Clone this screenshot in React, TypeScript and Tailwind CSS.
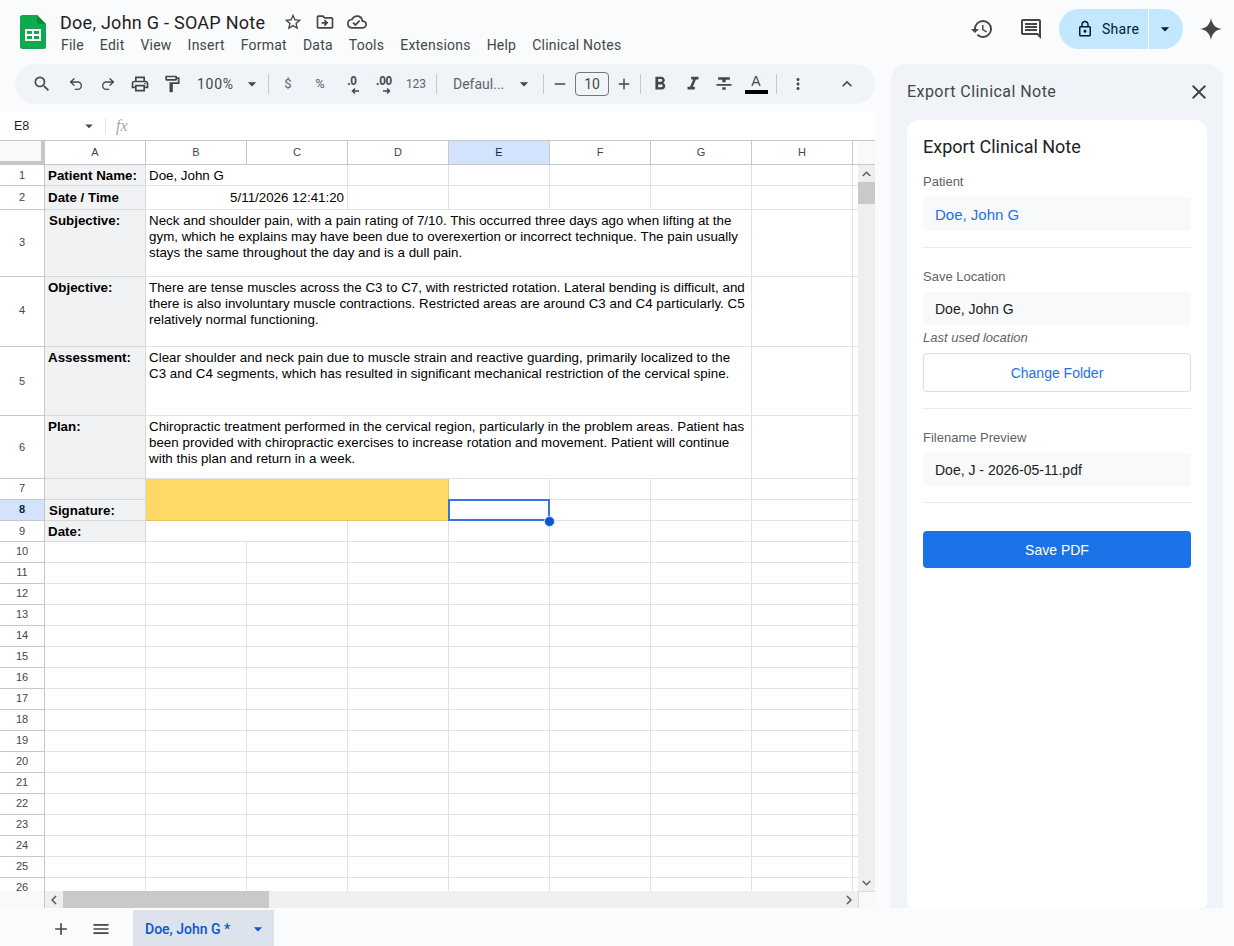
import type { ReactNode } from "react";
import { Redo2, Undo2 } from "lucide-react";
import {
  MdAdd,
  MdArrowDropDown,
  MdClose,
  MdExpandLess,
  MdFormatBold,
  MdFormatItalic,
  MdFormatStrikethrough,
  MdHistory,
  MdKeyboardArrowDown,
  MdKeyboardArrowLeft,
  MdKeyboardArrowRight,
  MdKeyboardArrowUp,
  MdMenu,
  MdMoreVert,
  MdOutlineCloudDone,
  MdOutlineComment,
  MdOutlineDriveFileMove,
  MdOutlineFormatPaint,
  MdOutlineLock,
  MdOutlinePrint,
  MdOutlineStarBorder,
  MdRemove,
  MdSearch,
} from "react-icons/md";

const arial = "[font-family:'Liberation_Sans',Arial,sans-serif]";
const menus = ["File", "Edit", "View", "Insert", "Format", "Data", "Tools", "Extensions", "Help", "Clinical Notes"];
const columns = ["A", "B", "C", "D", "E", "F", "G", "H"];
const blankRows = [10, 11, 12, 13, 14, 15, 16, 17, 18, 19, 20, 21, 22, 23, 24, 25, 26];
const centredLabels = [1, 2, 5, 6, 9];

function SheetsLogo() {
  return (
    <svg width="26" height="34" viewBox="0 0 26 34">
      <path d="M2.5 0H17l9 9v22.5a2.5 2.5 0 0 1-2.5 2.5h-21A2.5 2.5 0 0 1 0 31.500V2.500A2.500 2.500 0 0 1 2.500 0z" fill="#0fa94f" />
      <path d="M17 0l9 9h-6.500A2.500 2.500 0 0 1 17 6.500z" fill="#0b8a3e" />
      <path d="M5 14h16v12H5zm2 2v3h5v-3zm7 0v3h5v-3zm-7 5v3h5v-3zm7 0v3h5v-3z" fill="#fff" fillRule="evenodd" />
    </svg>
  );
}

function ToolButton({ children }: { children: ReactNode }) {
  return <div className="w-8 h-8 flex items-center justify-center text-[#444746] shrink-0">{children}</div>;
}

function Sep() {
  return <div className="w-px h-5 bg-[#c7c7c7] shrink-0" />;
}

function DecimalIcon({ label, right }: { label: string; right?: boolean }) {
  return (
    <ToolButton>
      <div className="relative w-6 h-6 text-[#444746]">
        <span className={`${arial} absolute top-[1px] left-0 right-0 text-center text-[12px] font-bold leading-4 tracking-[-0.3px]`}>{label}</span>
        <svg className="absolute left-0 top-0" width="24" height="24" viewBox="0 0 24 24">
          <path
            d={right ? "M11 19h6M15 16.500l2.500 2.500-2.500 2.500" : "M19 19h-6M15 16.500L12.500 19l2.500 2.500"}
            fill="none"
            stroke="#444746"
            strokeWidth="1.500"
          />
        </svg>
      </div>
    </ToolButton>
  );
}

function Toolbar() {
  return (
    <div className="ml-[15px] h-10 rounded-full bg-[#f0f4f9] flex items-center pl-[11px]">
      <ToolButton><MdSearch size={20} /></ToolButton>
      <div className="ml-[2px]"><ToolButton><Undo2 size={16} strokeWidth={2} /></ToolButton></div>
      <ToolButton><Redo2 size={16} strokeWidth={2} /></ToolButton>
      <ToolButton><MdOutlinePrint size={20} /></ToolButton>
      <ToolButton><MdOutlineFormatPaint size={20} /></ToolButton>
      <div className="w-[75px] pl-[9px] flex items-center text-[#444746] text-[14px] tracking-[0.7px] font-['Roboto',sans-serif] shrink-0">
        <span className="w-[45px]">100%</span>
        <MdArrowDropDown size={20} />
      </div>
      <div className="ml-[5px] mr-[3px]"><Sep /></div>
      <ToolButton><span className="text-[13px] text-[#5f6368] font-['Roboto',sans-serif]">$</span></ToolButton>
      <ToolButton><span className="text-[13px] text-[#5f6368] font-['Roboto',sans-serif]">%</span></ToolButton>
      <DecimalIcon label=".0" />
      <DecimalIcon label=".00" right />
      <ToolButton><span className="text-[12px] text-[#5f6368] font-['Roboto',sans-serif]">123</span></ToolButton>
      <div className="ml-[4px] mr-[16px]"><Sep /></div>
      <div className="w-[90px] flex items-center text-[14px] text-[#5f6368] font-['Roboto',sans-serif] shrink-0">
        <span className="w-[61px]">Defaul...</span>
        <MdArrowDropDown size={20} className="text-[#444746]" />
      </div>
      <Sep />
      <div className="ml-1 w-6 flex justify-center text-[#444746]"><MdRemove size={18} /></div>
      <div className="ml-[3px] w-[34px] h-6 rounded-[4px] border border-[#747775] text-[14px] text-[#444746] flex items-center justify-center font-['Roboto',sans-serif]">10</div>
      <div className="ml-[3px] w-6 flex justify-center text-[#444746]"><MdAdd size={18} /></div>
      <div className="ml-[4px] mr-[3px]"><Sep /></div>
      <ToolButton><MdFormatBold size={22} /></ToolButton>
      <div className="ml-[1px]"><ToolButton><MdFormatItalic size={22} /></ToolButton></div>
      <div className="-ml-[1px]"><ToolButton><MdFormatStrikethrough size={20} /></ToolButton></div>
      <div className="w-[32px] flex flex-col items-center shrink-0">
        <span className={`${arial} text-[14px] leading-[15px] text-[#444746]`}>A</span>
        <div className="w-[23px] h-1 bg-black mt-[1px]" />
      </div>
      <div className="ml-[4px] mr-[5px]"><Sep /></div>
      <ToolButton><MdMoreVert size={18} /></ToolButton>
      <div className="ml-[17px]"><ToolButton><MdExpandLess size={20} /></ToolButton></div>
    </div>
  );
}

function FormulaBar() {
  return (
    <div className={`${arial} mt-2 h-7 bg-white flex items-center`}>
      <span className="pl-[14px] w-[80px] text-[12.500px] text-[#1f1f1f]">E8</span>
      <MdArrowDropDown size={18} className="text-[#444746]" />
      <div className="ml-[7px] w-px h-4 bg-[#e1e3e1]" />
      <span className="ml-[10px] text-[16px] italic text-[#a8a8a8] [font-family:'Liberation_Serif',serif]">fx</span>
    </div>
  );
}

function RowLabel({ n, selected }: { n: number; selected?: boolean }) {
  return (
    <div
      className={`border-r border-b border-[#c7c7c7] flex items-center justify-center text-[11px] ${
        selected ? "bg-[#d3e3fd] text-[#0b1f44] font-bold" : "text-[#444746]"
      } ${centredLabels.includes(n) ? "" : "pb-[2px]"}`}
    >
      {n}
    </div>
  );
}

function Label({ children, shifted, top, high }: { children?: ReactNode; shifted?: boolean; top?: boolean; high?: boolean }) {
  return (
    <div
      className={`bg-[#f1f2f4] border-r border-b border-[#d9d9d9] font-bold text-[13.330px] leading-4 text-black whitespace-nowrap flex ${
        top ? "items-start pt-[3px]" : high ? "items-end pb-[3px]" : "items-end pb-[1px]"
      } ${shifted ? "pl-1" : "pl-[3px]"}`}
    >
      {children}
    </div>
  );
}

function Blank() {
  return <div className="border-r border-b border-[#e1e1e1]" />;
}

function Tail() {
  return <div className="border-b border-[#e1e1e1]" />;
}

function Note({ lines }: { lines: string[] }) {
  return (
    <div className="col-span-6 border-r border-b border-[#e1e1e1] pl-[3px] pt-[3px] text-[13.330px] tracking-[0.025px] leading-4 text-black whitespace-nowrap overflow-hidden">
      {lines.map((line) => (
        <div key={line}>{line}</div>
      ))}
    </div>
  );
}

function Sheet() {
  return (
    <div className={`${arial} grid grid-cols-[45px_repeat(8,101px)_5px] grid-rows-[24px_21px_24px_67px_70px_69px_63px_21px_21px_21px_repeat(17,21px)]`}>
      <div className="bg-[#f8f9fa] border-r-4 border-b-4 border-[#c7c7c7]" />
      {columns.map((c) => (
        <div
          key={c}
          className={`border-r border-b border-[#c7c7c7] flex items-center justify-center text-[11px] ${
            c === "E" ? "bg-[#d3e3fd] text-[#0b1f44]" : "text-[#444746]"
          }`}
        >
          {c}
        </div>
      ))}
      <div className="border-b border-[#c7c7c7]" />

      <RowLabel n={1} />
      <Label>Patient Name:</Label>
      <div className="col-span-2 border-r border-b border-[#e1e1e1] pl-[3px] pb-[1px] text-[13.330px] leading-4 text-black flex items-end">Doe, John G</div>
      <Blank /><Blank /><Blank /><Blank /><Blank /><Tail />

      <RowLabel n={2} />
      <Label high>Date / Time</Label>
      <div className="col-span-2 border-r border-b border-[#e1e1e1] pr-[3px] pb-[3px] text-[13.330px] leading-4 text-black flex items-end justify-end">5/11/2026 12:41:20</div>
      <Blank /><Blank /><Blank /><Blank /><Blank /><Tail />

      <RowLabel n={3} />
      <Label shifted top>Subjective:</Label>
      <Note
        lines={[
          "Neck and shoulder pain, with a pain rating of 7/10. This occurred three days ago when lifting at the",
          "gym, which he explains may have been due to overexertion or incorrect technique. The pain usually",
          "stays the same throughout the day and is a dull pain.",
        ]}
      />
      <Blank /><Tail />

      <RowLabel n={4} />
      <Label top>Objective:</Label>
      <Note
        lines={[
          "There are tense muscles across the C3 to C7, with restricted rotation. Lateral bending is difficult, and",
          "there is also involuntary muscle contractions. Restricted areas are around C3 and C4 particularly. C5",
          "relatively normal functioning.",
        ]}
      />
      <Blank /><Tail />

      <RowLabel n={5} />
      <Label top>Assessment:</Label>
      <Note
        lines={[
          "Clear shoulder and neck pain due to muscle strain and reactive guarding, primarily localized to the",
          "C3 and C4 segments, which has resulted in significant mechanical restriction of the cervical spine.",
        ]}
      />
      <Blank /><Tail />

      <RowLabel n={6} />
      <Label top>Plan:</Label>
      <Note
        lines={[
          "Chiropractic treatment performed in the cervical region, particularly in the problem areas. Patient has",
          "been provided with chiropractic exercises to increase rotation and movement. Patient will continue",
          "with this plan and return in a week.",
        ]}
      />
      <Blank /><Tail />

      <RowLabel n={7} />
      <Label />
      <div className="col-span-3 row-span-2 bg-[#ffd966] border-r border-b border-[#e8c45c]" />
      <Blank /><Blank /><Blank /><Blank /><Tail />

      <RowLabel n={8} selected />
      <Label shifted>Signature:</Label>
      <div className="relative border-r border-b border-[#e1e1e1]">
        <div className="absolute -left-px -top-px w-[102px] h-[22px] border-2 border-[#3574e3] z-10" />
        <div className="absolute -right-[6px] -bottom-[7px] w-[11px] h-[11px] rounded-full bg-[#0b57d0] border-[1.500px] border-[#d3e3fd] z-20" />
      </div>
      <Blank /><Blank /><Blank /><Tail />

      <RowLabel n={9} />
      <Label>Date:</Label>
      <div className="col-span-2 border-r border-b border-[#e1e1e1]" />
      <Blank /><Blank /><Blank /><Blank /><Blank /><Tail />

      {blankRows.map((n) => (
        <div key={n} className="contents">
          <RowLabel n={n} />
          <Blank /><Blank /><Blank /><Blank /><Blank /><Blank /><Blank /><Blank /><Tail />
        </div>
      ))}
    </div>
  );
}

function SheetArea() {
  return (
    <div className="flex-1 min-h-0 flex flex-col bg-white border-t border-[#c7c7c7]">
      <div className="flex-1 min-h-0 flex">
        <div className="w-[858px] overflow-hidden">
          <Sheet />
        </div>
        <div className="w-[17px] flex flex-col bg-[#efefef]">
          <div className="h-6 shrink-0 bg-[#f8f9fa] border-b border-[#c7c7c7]" />
          <div className="h-[17px] shrink-0 flex items-center justify-center text-[#5a5a5a]"><MdKeyboardArrowUp size={18} /></div>
          <div className="h-[22px] shrink-0 bg-[#c9c9c9]" />
          <div className="flex-1" />
          <div className="h-[17px] shrink-0 flex items-center justify-center text-[#5a5a5a]"><MdKeyboardArrowDown size={18} /></div>
        </div>
      </div>
      <div className="h-[17px] shrink-0 flex bg-[#efefef]">
        <div className="w-[45px] bg-[#f8f9fa] border-r border-[#c7c7c7]" />
        <div className="w-[18px] flex items-center justify-center text-[#5a5a5a]"><MdKeyboardArrowLeft size={18} /></div>
        <div className="w-[206px] bg-[#c9c9c9]" />
        <div className="w-[589px] flex items-center justify-end text-[#5a5a5a]"><MdKeyboardArrowRight size={18} /></div>
        <div className="flex-1 bg-[#f8f9fa] border-l border-t border-[#dadada]" />
      </div>
    </div>
  );
}

function Field({ children, blue, large }: { children: ReactNode; blue?: boolean; large?: boolean }) {
  return (
    <div
      className={`mt-2 rounded-[4px] bg-[#f8f9fa] px-3 pt-[2px] flex items-center ${
        blue ? "text-[#1a73e8]" : "text-[#202124]"
      } ${large ? "h-[34px] text-[15px]" : "h-[33px] text-[14px]"}`}
    >
      {children}
    </div>
  );
}

function FieldLabel({ children }: { children: ReactNode }) {
  return <div className="text-[13px] leading-[15px] text-[#5f6368]">{children}</div>;
}

function Divider() {
  return <div className="h-px bg-[#e8eaed]" />;
}

function ExportPanel() {
  return (
    <div className="w-[332px] rounded-t-2xl bg-[#f0f4f9] px-4 flex flex-col">
      <div className="h-14 shrink-0 flex items-center justify-between">
        <span className="text-[16px] tracking-[0.45px] text-[#444746] font-['Roboto',sans-serif]">Export Clinical Note</span>
        <MdClose size={24} className="mr-[-4px] text-[#444746]" />
      </div>
      <div className={`${arial} flex-1 rounded-t-xl rounded-b-md bg-white px-4 pt-[16px]`}>
        <div className="text-[18px] leading-[22px] text-[#202124] font-['Roboto',sans-serif]">Export Clinical Note</div>
        <div className="mt-[16px]"><FieldLabel>Patient</FieldLabel></div>
        <Field blue large>Doe, John G</Field>
        <div className="mt-4"><Divider /></div>
        <div className="mt-[21px]"><FieldLabel>Save Location</FieldLabel></div>
        <Field>Doe, John G</Field>
        <div className="mt-[5px] text-[13px] leading-[16px] italic text-[#5f6368]">Last used location</div>
        <div className="mt-[7px] h-[39px] rounded-[4px] border border-[#dadce0] pt-[2px] flex items-center justify-center text-[14px] text-[#1a73e8]">Change Folder</div>
        <div className="mt-4"><Divider /></div>
        <div className="mt-[21px]"><FieldLabel>Filename Preview</FieldLabel></div>
        <Field>Doe, J - 2026-05-11.pdf</Field>
        <div className="mt-4"><Divider /></div>
        <div className="mt-7 h-[37px] rounded-[4px] bg-[#1a73e8] pt-[2px] flex items-center justify-center text-[14px] text-white">Save PDF</div>
      </div>
    </div>
  );
}

function Header() {
  return (
    <div className="h-16 shrink-0 flex font-['Roboto',sans-serif]">
      <div className="ml-5 mt-[15px]"><SheetsLogo /></div>
      <div className="ml-[14px]">
        <div className="mt-[10px] flex items-center h-6">
          <span className="w-[223px] text-[18px] tracking-[0.26px] text-[#1f1f1f] whitespace-nowrap">Doe, John G - SOAP Note</span>
          <MdOutlineStarBorder size={20} className="text-[#444746]" />
          <MdOutlineDriveFileMove size={20} className="ml-3 text-[#444746]" />
          <MdOutlineCloudDone size={20} className="ml-3 text-[#444746]" />
        </div>
        <div className="mt-[1px] ml-[1px] flex gap-4 text-[14px] tracking-[0.22px] leading-5 text-[#444746]">
          {menus.map((m) => (
            <span key={m}>{m}</span>
          ))}
        </div>
      </div>
      <div className="ml-auto flex items-center h-[58px] pr-[12px]">
        <MdHistory size={24} className="text-[#444746]" />
        <MdOutlineComment size={24} className="ml-[25px] text-[#444746]" />
        <div className="ml-4 h-10 w-[124px] rounded-full bg-[#c2e7ff] flex items-center text-[#001d35]">
          <MdOutlineLock size={18} className="ml-[17px]" />
          <span className="ml-[8px] w-[46px] text-[14px] tracking-[0.3px]">Share</span>
          <div className="w-px h-10 bg-white" />
          <MdArrowDropDown size={20} className="ml-[6px]" />
        </div>
        <svg className="ml-[17px] text-[#444746]" width="22" height="22" viewBox="0 0 22 22">
          <path d="M11 0c1 6 4 10 11 11-7 1-10 5-11 11-1-6-4-10-11-11C7 10 10 6 11 0z" fill="currentColor" />
        </svg>
      </div>
    </div>
  );
}

function TabBar() {
  return (
    <div className="h-[38px] shrink-0 flex items-end text-[#444746]">
      <MdAdd size={20} className="ml-[51px] mb-[7px]" />
      <MdMenu size={20} className="ml-5 mb-[7px]" />
      <div className="ml-[22px] w-[141px] h-9 bg-[#dce3ec] flex items-center pl-3 pt-[2px] text-[#0b57d0] text-[14px] font-medium font-['Roboto',sans-serif]">
        <span className="w-[103px] whitespace-nowrap">Doe, John G *</span>
        <MdArrowDropDown size={20} />
      </div>
    </div>
  );
}

export default function App() {
  return (
    <div className="w-[1234px] h-[946px] bg-[#f9fbfd] flex flex-col overflow-hidden">
      <Header />
      <div className="flex-1 min-h-0 flex gap-4">
        <div className="w-[875px] flex flex-col">
          <Toolbar />
          <FormulaBar />
          <SheetArea />
        </div>
        <ExportPanel />
      </div>
      <TabBar />
    </div>
  );
}
